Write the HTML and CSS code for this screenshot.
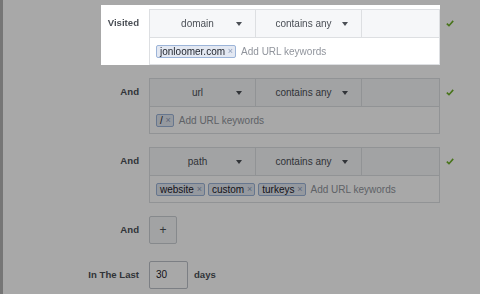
FILE: index.html
```html
<!DOCTYPE html>
<html lang="en">
<head>
    <meta charset="UTF-8">
    <title>Website Custom Audience - URL rules</title>
    <link rel="stylesheet" href="styles.css">
</head>
<body>
    <div class="rules">
        <div class="rule">
            <div class="rule-main is-focus">
                <div class="rule-label">Visited</div>
                <div class="cond">
                    <div class="cond-head">
                        <div class="cond-cell"><span class="cond-text">domain</span><span class="caret"></span></div>
                        <div class="cond-cell"><span class="cond-text">contains any</span><span class="caret"></span></div>
                        <div class="cond-cell cond-cell-last"></div>
                    </div>
                    <div class="cond-keys">
                        <span class="tag">jonloomer.com <span class="tag-x">×</span></span>
                        <span class="placeholder">Add URL keywords</span>
                    </div>
                </div>
            </div>
            <div class="rule-check"><svg width="8" height="7" viewBox="0 0 8 7"><path d="M0.8 3.6 L3 5.7 L7.2 0.9" fill="none" stroke="#6fb12a" stroke-width="1.6"/></svg></div>
        </div>

        <div class="rule">
            <div class="rule-main">
                <div class="rule-label">And</div>
                <div class="cond">
                    <div class="cond-head">
                        <div class="cond-cell"><span class="cond-text">url</span><span class="caret"></span></div>
                        <div class="cond-cell"><span class="cond-text">contains any</span><span class="caret"></span></div>
                        <div class="cond-cell cond-cell-last"></div>
                    </div>
                    <div class="cond-keys">
                        <span class="tag">/ <span class="tag-x">×</span></span>
                        <span class="placeholder">Add URL keywords</span>
                    </div>
                </div>
            </div>
            <div class="rule-check"><svg width="8" height="7" viewBox="0 0 8 7"><path d="M0.8 3.6 L3 5.7 L7.2 0.9" fill="none" stroke="#6fb12a" stroke-width="1.6"/></svg></div>
        </div>

        <div class="rule">
            <div class="rule-main">
                <div class="rule-label">And</div>
                <div class="cond">
                    <div class="cond-head">
                        <div class="cond-cell"><span class="cond-text">path</span><span class="caret"></span></div>
                        <div class="cond-cell"><span class="cond-text">contains any</span><span class="caret"></span></div>
                        <div class="cond-cell cond-cell-last"></div>
                    </div>
                    <div class="cond-keys">
                        <span class="tag">website <span class="tag-x">×</span></span>
                        <span class="tag">custom <span class="tag-x">×</span></span>
                        <span class="tag">turkeys <span class="tag-x">×</span></span>
                        <span class="placeholder">Add URL keywords</span>
                    </div>
                </div>
            </div>
            <div class="rule-check"><svg width="8" height="7" viewBox="0 0 8 7"><path d="M0.8 3.6 L3 5.7 L7.2 0.9" fill="none" stroke="#6fb12a" stroke-width="1.6"/></svg></div>
        </div>

        <div class="rule">
            <div class="rule-main">
                <div class="rule-label">And</div>
                <div class="add-btn">+</div>
            </div>
        </div>

        <div class="rule rule-last">
            <div class="rule-main">
                <div class="rule-label">In The Last</div>
                <div class="days-input">30</div>
                <div class="days-text">days</div>
            </div>
        </div>
    </div>

    <div class="dim"></div>
</body>
</html>
```

FILE: styles.css
```css
* {
    margin: 0;
    padding: 0;
    box-sizing: border-box;
}

body {
    font-family: 'Liberation Sans', Arial, sans-serif;
    font-size: 10px;
    color: #4b4f56;
    background: linear-gradient(90deg, #b4b4b4 3px, #fff 3px);
    min-height: 100vh;
}

.rules {
    display: flex;
    flex-direction: column;
    gap: 13px;
    padding-top: 5px;
}

.rule {
    display: flex;
    align-items: flex-start;
}

.rule-last {
    margin-top: 4px;
}

.rule-main {
    display: flex;
    align-items: flex-start;
    gap: 10px;
    width: 440px;
}

/* the row the tour is pointing at sits above the dim layer */
.rule-main.is-focus {
    position: relative;
    z-index: 2;
    padding-top: 4px;
    margin-top: -4px;
    background: linear-gradient(90deg, transparent 101px, #fff 101px);
}

.rules > .rule:first-child {
    margin-top: 4px;
}

.rule-label {
    width: 139px;
    flex: 0 0 139px;
    text-align: right;
    line-height: 28px;
    font-size: 9.6px;
    font-weight: bold;
    color: #4b4f56;
    white-space: nowrap;
}

.cond {
    width: 291px;
    border: 1px solid #dddfe2;
    background: #fff;
}

.cond-head {
    display: flex;
    height: 28px;
    background: #f6f7f9;
    border-bottom: 1px solid #dddfe2;
}

.cond-cell {
    flex: 0 0 106px;
    display: flex;
    align-items: center;
    padding: 0 13px 0 9px;
    border-right: 1px solid #dddfe2;
}

.cond-cell-last {
    flex: 1;
    border-right: none;
}

.cond-text {
    flex: 1;
    text-align: center;
    font-size: 10px;
    color: #4b4f56;
}

.caret {
    width: 0;
    height: 0;
    border-left: 3.5px solid transparent;
    border-right: 3.5px solid transparent;
    border-top: 4px solid #4b4f56;
    margin-top: 1px;
}

.cond-keys {
    display: flex;
    align-items: center;
    gap: 3px;
    height: 26px;
    padding-left: 6px;
}

.tag {
    display: inline-flex;
    align-items: center;
    height: 13px;
    padding: 0 2px 0 3px;
    border: 1px solid #9cb4d8;
    border-radius: 2px;
    background: #e3e8f2;
    color: #1d2129;
    font-size: 10px;
    line-height: 11px;
    white-space: pre;
}

.tag-x {
    color: #8d9cb9;
    font-size: 9px;
}

.placeholder {
    margin-left: 2px;
    color: #90949c;
    font-size: 10px;
}

.rule-check {
    margin-left: 6px;
    height: 28px;
    display: flex;
    align-items: center;
}

.rules > .rule:first-child .rule-check {
    margin-top: 0;
}

.add-btn {
    width: 28px;
    height: 28px;
    display: flex;
    align-items: center;
    justify-content: center;
    border: 1px solid #ccd0d5;
    border-radius: 2px;
    background: #f6f7f9;
    font-size: 12px;
    color: #4b4f56;
}

.days-input {
    width: 39px;
    height: 28px;
    border: 1px solid #bdc1c9;
    border-radius: 2px;
    background: #fff;
    padding-left: 6px;
    line-height: 26px;
    font-size: 10px;
    color: #1d2129;
}

.days-text {
    margin-left: -4px;
    line-height: 28px;
    font-size: 9.6px;
    font-weight: bold;
    color: #4b4f56;
}

.dim {
    position: fixed;
    top: 0;
    left: 0;
    right: 0;
    bottom: 0;
    background: rgba(0, 0, 0, 0.34);
    z-index: 1;
}
```
